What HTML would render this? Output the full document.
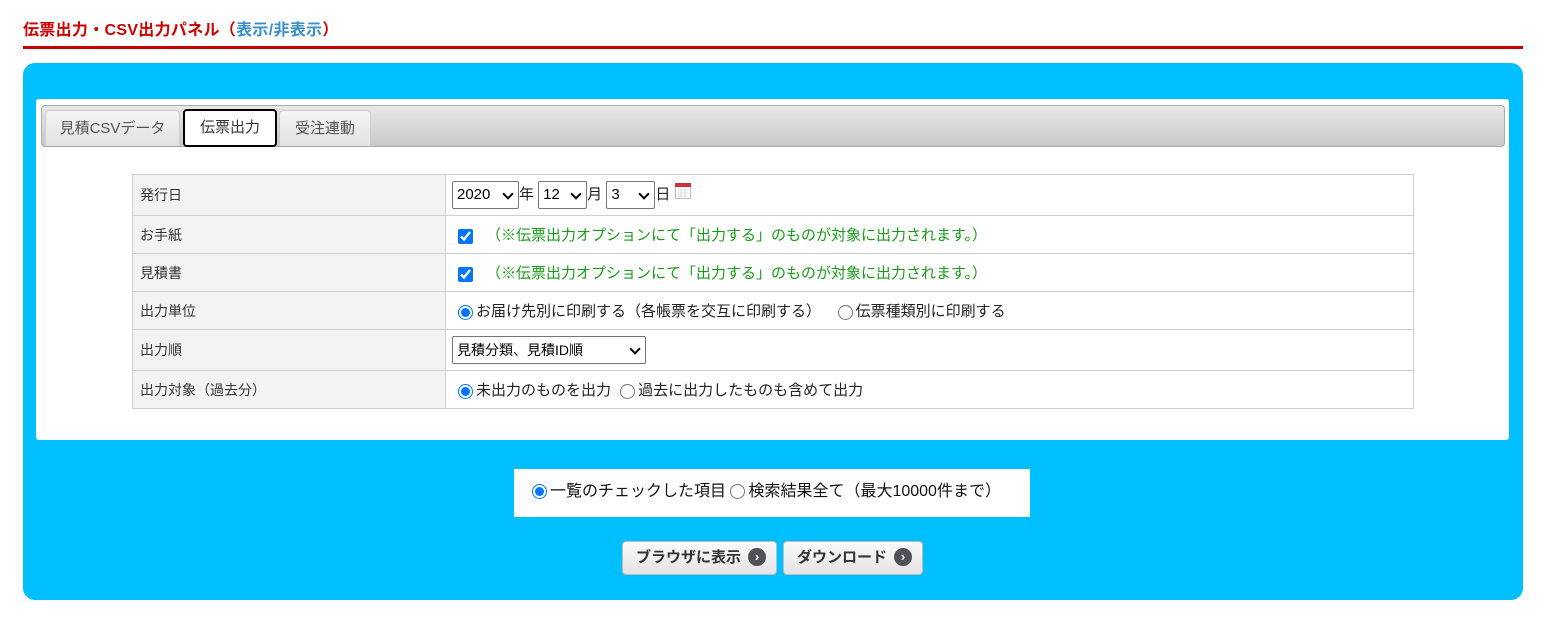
<!DOCTYPE html>
<html><head><meta charset="utf-8"><style>
*{box-sizing:border-box;margin:0;padding:0}
body{width:1554px;height:621px;background:#fff;font-family:"Liberation Sans","Noto Sans CJK JP",sans-serif;font-size:14px;color:#333;position:relative;overflow:hidden}
.a{position:absolute}
.title{left:23px;top:16px;font-size:16px;font-weight:bold;color:#c00;letter-spacing:0.3px}
.title span{color:#3a8fc8}
.line{left:23px;top:46px;width:1500px;height:3px;background:#c00}
.panel{left:23px;top:63px;width:1500px;height:537px;background:#00bfff;border-radius:12px}
.box{left:36px;top:99px;width:1473px;height:341px;background:#fff;border-radius:3px}
.bar{left:41px;top:105px;width:1464px;height:42px;border:1px solid #aaa;border-radius:4px;background:linear-gradient(#e8e8e8,#c9c9c9)}
.tab{top:110px;height:36px;background:linear-gradient(#f4f4f4,#e2e2e2);border:1px solid #ccc;border-bottom:none;border-radius:4px 4px 0 0;text-align:center;line-height:36px;color:#555;font-size:15px}
.tab.on{top:109px;height:38px;background:#fff;border:2px solid #000;border-radius:4px;color:#333;line-height:34px}
table{position:absolute;left:132px;top:174px;width:1282px;border-collapse:collapse}
td{border:1px solid #d0d0d0;padding:0 7px;font-size:15px}
td.l{width:313px;background:#f2f3f2;font-size:14px}
.sel{display:inline-block;border:1px solid #767676;border-radius:2px;height:28px;line-height:26px;padding-left:4px;position:relative;vertical-align:middle;color:#000;background:#fff;font-size:15px}
.sel:after{content:"";position:absolute;right:6px;top:8px;width:6px;height:6px;border-right:2px solid #000;border-bottom:2px solid #000;transform:rotate(45deg)}
.g{color:#1a9a1a}
input{vertical-align:middle;margin:0 4px 0 5px;accent-color:#0075ff;width:15px;height:15px}
.rad{left:514px;top:469px;width:516px;height:48px;background:#fff;line-height:46px;padding-left:18px;color:#111;font-size:16px}
.btn{top:541px;height:34px;border:1px solid #bbb;border-radius:4px;background:linear-gradient(#fafafa,#e4e4e4);font-weight:bold;color:#333;line-height:32px;padding-left:13px;font-size:15px}
.btn i{display:inline-block;width:18px;height:18px;border-radius:50%;background:#505058;color:#fff;font-style:normal;font-size:13px;font-weight:bold;line-height:17px;text-align:center;vertical-align:middle;margin-left:7px;margin-top:-3px}
</style></head><body>
<div class="a title">伝票出力・CSV出力パネル（<span>表示/非表示</span>）</div>
<div class="a line"></div>
<div class="a panel"></div>
<div class="a box"></div>
<div class="a bar"></div>
<div class="a tab" style="left:45px;width:135px">見積CSVデータ</div>
<div class="a tab on" style="left:183px;width:94px">伝票出力</div>
<div class="a tab" style="left:279px;width:92px">受注連動</div>
<table>
<tr style="height:41px"><td class="l">発行日</td><td style="color:#222"><span class="sel" style="width:67px;margin-left:-1px">2020</span>年 <span class="sel" style="width:49px">12</span>月 <span class="sel" style="width:49px">3</span>日 <svg width="16" height="16" style="vertical-align:top;margin-top:2px"><rect x="0.5" y="0.5" width="15" height="15" fill="#fff" stroke="#bbb"/><rect x="0" y="0" width="16" height="4" fill="#c33"/><path d="M3 7h10M3 10h10M3 13h10M6 5v10M10 5v10" stroke="#ddd"/></svg></td></tr>
<tr style="height:38px"><td class="l">お手紙</td><td><input type="checkbox" checked style="margin-right:13px"><span class="g">（※伝票出力オプションにて「出力する」のものが対象に出力されます。）</span></td></tr>
<tr style="height:38px"><td class="l">見積書</td><td><input type="checkbox" checked style="margin-right:13px"><span class="g">（※伝票出力オプションにて「出力する」のものが対象に出力されます。）</span></td></tr>
<tr style="height:38px"><td class="l">出力単位</td><td style="color:#222"><input type="radio" checked name="a" style="margin-right:3px">お届け先別に印刷する（各帳票を交互に印刷する）　 <input type="radio" name="a" style="margin-right:3px">伝票種類別に印刷する</td></tr>
<tr style="height:41px"><td class="l">出力順</td><td><span class="sel" style="width:194px;font-size:14px;margin-left:-1px">見積分類、見積ID順</span></td></tr>
<tr style="height:38px"><td class="l">出力対象（過去分）</td><td style="color:#222"><input type="radio" checked name="b" style="margin-right:3px">未出力のものを出力 <input type="radio" name="b" style="margin-right:3px">過去に出力したものも含めて出力</td></tr>
</table>
<div class="a rad"><input type="radio" checked name="c" style="margin:0 3px 0 0">一覧のチェックした項目 <input type="radio" name="c" style="margin:0 3px 0 0">検索結果全て（最大10000件まで）</div>
<div class="a btn" style="left:622px;width:155px">ブラウザに表示<i>›</i></div>
<div class="a btn" style="left:783px;width:140px">ダウンロード<i>›</i></div>
</body></html>
